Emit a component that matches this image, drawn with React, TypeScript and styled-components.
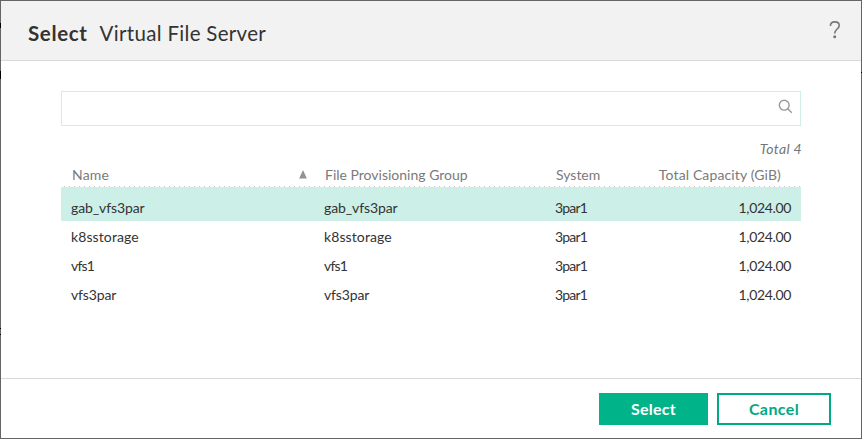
import React from 'react';
import styled, { createGlobalStyle, css } from 'styled-components';

const GlobalStyle = createGlobalStyle`
  * { box-sizing: border-box; }
  body { margin: 0; font-family: Lato, "Liberation Sans", sans-serif; font-size: 14px; color: #333; }
`;

const Frame = styled.div`
  height: 439px;
  padding: 1px;
  background:
    linear-gradient(#000, #000) 0 23px / 1px 5px no-repeat,
    linear-gradient(#000, #000) 0 71px / 1px 8px no-repeat,
    linear-gradient(#000, #000) 0 328px / 1px 1px no-repeat,
    linear-gradient(#000, #000) 0 334px / 1px 1px no-repeat,
    linear-gradient(#000, #000) 861px 72px / 1px 1px no-repeat,
    #666465;
`;

const Dialog = styled.section`
  display: flex;
  flex-direction: column;
  height: 437px;
  background: #fff;
`;

const Header = styled.header`
  display: flex;
  justify-content: space-between;
  height: 60px;
  padding: 0 20px 0 27px;
  background: #f2f2f2;
  border-bottom: 1px solid #d9d9d9;
`;

const Title = styled.h1`
  display: flex;
  gap: 12px;
  margin: 0;
  padding-top: 19px;
  font-size: 20.5px;
  font-weight: 400;
  line-height: 26px;
  letter-spacing: 0.31px;
  white-space: nowrap;
`;

const Action = styled.strong`
  font-weight: 700;
  letter-spacing: 0.65px;
`;

const HelpIcon = styled.svg`
  width: 12px;
  height: 18px;
  margin-top: 20px;
`;

const Body = styled.main`
  flex: 1;
  padding: 30px 60px 0;
`;

const SearchBox = styled.div`
  display: flex;
  justify-content: flex-end;
  height: 35px;
  padding: 7px 7px 0 0;
  border: 1px solid #ccefe6;
`;

const SearchIcon = styled.svg`
  width: 15px;
  height: 15px;
`;

const Total = styled.div`
  height: 36px;
  margin-right: -1px;
  padding-top: 13px;
  line-height: 20px;
  text-align: right;
  font-style: italic;
  color: #757575;
  letter-spacing: 0.35px;
`;

const columns = css`
  display: grid;
  grid-template-columns: 253px 231px 90px 1fr;
  padding-left: 10px;
`;

const TableHead = styled.div`
  ${columns}
  height: 25px;
  padding-top: 3px;
  line-height: 20px;
  color: #7a7a7a;
  background: linear-gradient(#fff, #fff) 0 0 / 100% 24px no-repeat,
    repeating-linear-gradient(90deg, #fff 0 3px, #c4c4c4 3px 4px, #fff 4px 5px);
`;

const HeadCell = styled.div<{ $spacing?: number; $right?: boolean }>`
  display: flex;
  justify-content: ${p => (p.$right ? 'flex-end' : 'space-between')};
  padding-left: 1px;
  padding-right: ${p => (p.$right ? 20 : 17)}px;
  letter-spacing: ${p => p.$spacing ?? 0}px;
  white-space: nowrap;
`;

const SortIcon = styled.svg`
  width: 8px;
  height: 9px;
  margin-top: 5px;
`;

const Row = styled.div<{ $selected?: boolean }>`
  ${columns}
  height: ${p => (p.$selected ? 34 : 29)}px;
  padding-top: ${p => (p.$selected ? 11 : 6)}px;
  line-height: 20px;
  background: ${p => (p.$selected ? '#ccefe7' : '#fff')};
`;

const Cell = styled.div<{ $spacing: number; $right?: boolean }>`
  letter-spacing: ${p => p.$spacing}px;
  text-align: ${p => (p.$right ? 'right' : 'left')};
  padding-right: ${p => (p.$right ? 10 : 0)}px;
`;

const Footer = styled.footer`
  display: flex;
  justify-content: flex-end;
  gap: 9px;
  height: 60px;
  padding: 14px 30px 0;
  border-top: 1px solid #d9d9d9;
`;

const Button = styled.button<{ $primary?: boolean }>`
  width: ${p => (p.$primary ? 109 : 114)}px;
  height: 32px;
  padding: 0;
  border: 2px solid ${p => (p.$primary ? '#01b388' : '#01a982')};
  background: ${p => (p.$primary ? '#01b388' : '#fff')};
  color: ${p => (p.$primary ? '#fff' : '#01a982')};
  font: 700 16px/28px Lato, "Liberation Sans", sans-serif;
  letter-spacing: ${p => (p.$primary ? 0.25 : 0.4)}px;
`;

const servers = [
  { name: 'gab_vfs3par', spacing: -0.1 },
  { name: 'k8sstorage', spacing: 0.1 },
  { name: 'vfs1', spacing: -0.8 },
  { name: 'vfs3par', spacing: -0.15 },
];

export default function App() {
  return (
    <Frame>
      <GlobalStyle />
      <Dialog>
        <Header>
          <Title><Action>Select</Action><span>Virtual File Server</span></Title>
          <HelpIcon viewBox="0 0 12 18" fill="none" stroke="#777" strokeWidth="1.6">
            <path d="M1.4 5C1.4 2.4 3.1.9 5.8.9s4.4 1.4 4.4 3.6c0 3.6-4.5 3.5-4.5 8" />
            <circle cx="5.7" cy="15.7" r="1.5" fill="#777" stroke="none" />
          </HelpIcon>
        </Header>
        <Body>
          <SearchBox>
            <SearchIcon viewBox="0 0 15 15" fill="none" stroke="#999" strokeWidth="1.4">
              <circle cx="6.2" cy="6.2" r="4.9" />
              <path d="M9.7 9.7 13.8 13.7" />
            </SearchIcon>
          </SearchBox>
          <Total>Total 4</Total>
          <TableHead>
            <HeadCell $spacing={0.2}>
              Name
              <SortIcon viewBox="0 0 8 9"><path d="M4 0 7.9 8.6H.1Z" fill="#929292" /></SortIcon>
            </HeadCell>
            <HeadCell>File Provisioning Group</HeadCell>
            <HeadCell>System</HeadCell>
            <HeadCell $right $spacing={0.13}>Total Capacity (GiB)</HeadCell>
          </TableHead>
          {servers.map((s, i) => (
            <Row key={s.name} $selected={i === 0}>
              <Cell $spacing={s.spacing}>{s.name}</Cell>
              <Cell $spacing={s.spacing}>{s.name}</Cell>
              <Cell $spacing={-0.8}>3par1</Cell>
              <Cell $right $spacing={-0.35}>1,024.00</Cell>
            </Row>
          ))}
        </Body>
        <Footer>
          <Button $primary>Select</Button>
          <Button>Cancel</Button>
        </Footer>
      </Dialog>
    </Frame>
  );
}
